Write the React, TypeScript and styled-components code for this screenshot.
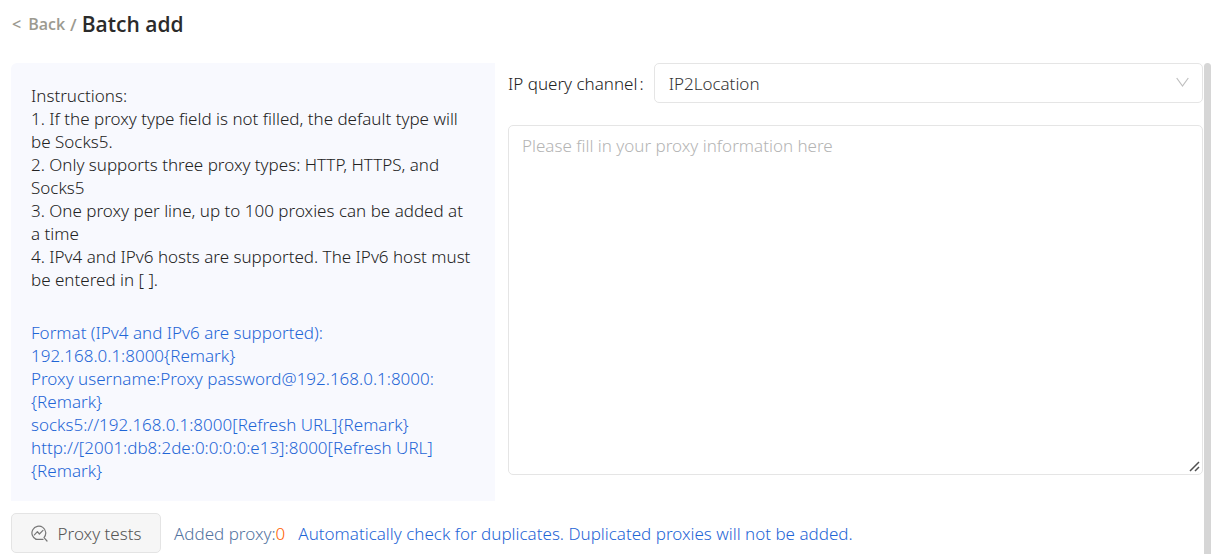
import React, { useState } from "react";
import styled, { createGlobalStyle } from "styled-components";

const GlobalStyle = createGlobalStyle`
  *, *::before, *::after { box-sizing: border-box; }
  body {
    margin: 0;
    background: #fff;
    color: #222;
    font: 300 17px/23px "Segoe UI", "Noto Sans", sans-serif;
  }
  button, select, textarea { font: inherit; }
`;

const Page = styled.div`
  display: flex;
  flex-direction: column;
  min-height: 100vh;
`;

const Header = styled.header`
  display: flex;
  align-items: center;
  gap: 5px;
  height: 48px;
  margin-bottom: 15px;
  padding-left: 12px;
  color: #9c9a90;
  font-family: "Segoe UI", "Open Sans", sans-serif;
  font-size: 17px;
  font-weight: 600;
`;

const BackLink = styled.a`
  display: flex;
  align-items: center;
  gap: 7px;
  color: inherit;
  font-size: 16px;
  text-decoration: none;
`;

const Title = styled.h1`
  margin: 0;
  color: #2b2b2b;
  font-size: 21px;
  line-height: 28px;
  font-weight: 600;
`;

const ScrollArea = styled.div`
  display: flex;
  flex: 1;
  gap: 1px;
  padding-left: 11px;
`;

const ScrollThumb = styled.div`
  flex: none;
  width: 7px;
  border-radius: 4px 4px 0 0;
  background: #d6d6d6;
`;

const Content = styled.main`
  flex: 1;
  min-width: 0;
`;

const Columns = styled.div`
  display: grid;
  grid-template-columns: 484fr 695fr;
  gap: 13px;
`;

const Instructions = styled.section`
  padding: 21px 20px 19px;
  border-radius: 6px 0 0 0;
  background: #f8f9fe;
  white-space: nowrap;
`;

const Paragraph = styled.p<{ $accent?: boolean }>`
  margin: 0;
  color: ${(p) => (p.$accent ? "#1f66d6" : "#222")};

  & + & {
    margin-top: 30px;
  }
`;

const Form = styled.form`
  display: flex;
  flex-direction: column;
  gap: 22px;
`;

const Field = styled.div`
  display: flex;
  align-items: center;
  gap: 10px;
`;

const Label = styled.label`
  display: flex;
  gap: 2px;
`;

const SelectBox = styled.div`
  position: relative;
  flex: 1;
`;

const TextBox = styled.div`
  position: relative;
`;

const Select = styled.select`
  display: block;
  width: 100%;
  height: 40px;
  padding: 0 40px 0 14px;
  appearance: none;
  border: 1px solid #e5e5e5;
  border-radius: 5px;
  background: #fff;
  color: #333;
`;

const Arrow = styled.svg`
  position: absolute;
  top: 14px;
  right: 14px;
  pointer-events: none;
`;

const TextArea = styled.textarea`
  display: block;
  width: 100%;
  height: 350px;
  padding: 8px 13px;
  resize: vertical;
  border: 1px solid #e5e5e5;
  border-radius: 5px;
  background: #fff;
  color: #222;

  &::placeholder {
    color: #b4b4b4;
    opacity: 1;
  }

  &::-webkit-resizer {
    background: transparent;
  }
`;

const Grip = styled.svg`
  position: absolute;
  right: 3px;
  bottom: 3px;
  pointer-events: none;
`;

const Footer = styled.footer`
  display: flex;
  align-items: center;
  gap: 13px;
  margin-top: 12px;
`;

const TestButton = styled.button`
  display: flex;
  align-items: center;
  justify-content: center;
  gap: 10px;
  width: 150px;
  height: 40px;
  padding: 0;
  border: 1px solid #e4e4e4;
  border-radius: 5px;
  background: #f6f6f6;
  color: #555;
`;

const Added = styled.span`
  color: #54749f;
`;

const Count = styled.span`
  color: #ff6000;
`;

const Notice = styled.span`
  color: #1f66d6;
`;

export default function App() {
  const [text, setText] = useState("");

  return (
    <>
      <GlobalStyle />
      <Page>
        <Header>
          <BackLink href="#">
            <span>&lt;</span>
            Back
          </BackLink>
          <span>/</span>
          <Title>Batch add</Title>
        </Header>
        <ScrollArea>
          <Content>
            <Columns>
              <Instructions>
                <Paragraph>
                  Instructions:<br />
                  1. If the proxy type field is not filled, the default type will<br />
                  be Socks5.<br />
                  2. Only supports three proxy types: HTTP, HTTPS, and<br />
                  Socks5<br />
                  3. One proxy per line, up to 100 proxies can be added at<br />
                  a time<br />
                  4. IPv4 and IPv6 hosts are supported. The IPv6 host must<br />
                  be entered in [ ].
                </Paragraph>
                <Paragraph $accent>
                  Format (IPv4 and IPv6 are supported):<br />
                  192.168.0.1:8000{"{Remark}"}<br />
                  Proxy username:Proxy password@192.168.0.1:8000:<br />
                  {"{Remark}"}<br />
                  socks5://192.168.0.1:8000[Refresh URL]{"{Remark}"}<br />
                  http://[2001:db8:2de:0:0:0:0:e13]:8000[Refresh URL]<br />
                  {"{Remark}"}
                </Paragraph>
              </Instructions>
              <Form>
                <Field>
                  <Label htmlFor="channel">
                    IP query channel<span>:</span>
                  </Label>
                  <SelectBox>
                    <Select id="channel" defaultValue="IP2Location">
                      <option>IP2Location</option>
                    </Select>
                    <Arrow width="13" height="11" viewBox="0 0 13 11" fill="none" stroke="#bfbfbf" strokeWidth="1.2" aria-hidden="true">
                      <path d="M0.7 1 6.5 9 12.3 1" />
                    </Arrow>
                  </SelectBox>
                </Field>
                <TextBox>
                  <TextArea
                    aria-label="Proxy information"
                    placeholder="Please fill in your proxy information here"
                    value={text}
                    onChange={(e) => setText(e.target.value)}
                  />
                  <Grip width="11" height="11" viewBox="0 0 11 11" fill="none" stroke="#505050" strokeWidth="1.5" aria-hidden="true">
                    <path d="M1 10 10 1M6 10 10 6" />
                  </Grip>
                </TextBox>
              </Form>
            </Columns>
            <Footer>
              <TestButton type="button">
                <svg width="17" height="17" viewBox="0 0 17 17" fill="none" stroke="#777" strokeWidth="1.2" strokeLinecap="round" strokeLinejoin="round" aria-hidden="true">
                  <path d="M5.2 14.4 A6.9 6.9 0 1 1 13 12.6 L16 16" />
                  <path d="M5.2 14.4 H12" />
                  <path d="M3.4 9.8 6.4 6.6 8.4 9 12 5.4" />
                </svg>
                Proxy tests
              </TestButton>
              <Added>
                Added proxy:<Count>0</Count>
              </Added>
              <Notice>Automatically check for duplicates. Duplicated proxies will not be added.</Notice>
            </Footer>
          </Content>
          <ScrollThumb aria-hidden="true" />
        </ScrollArea>
      </Page>
    </>
  );
}
